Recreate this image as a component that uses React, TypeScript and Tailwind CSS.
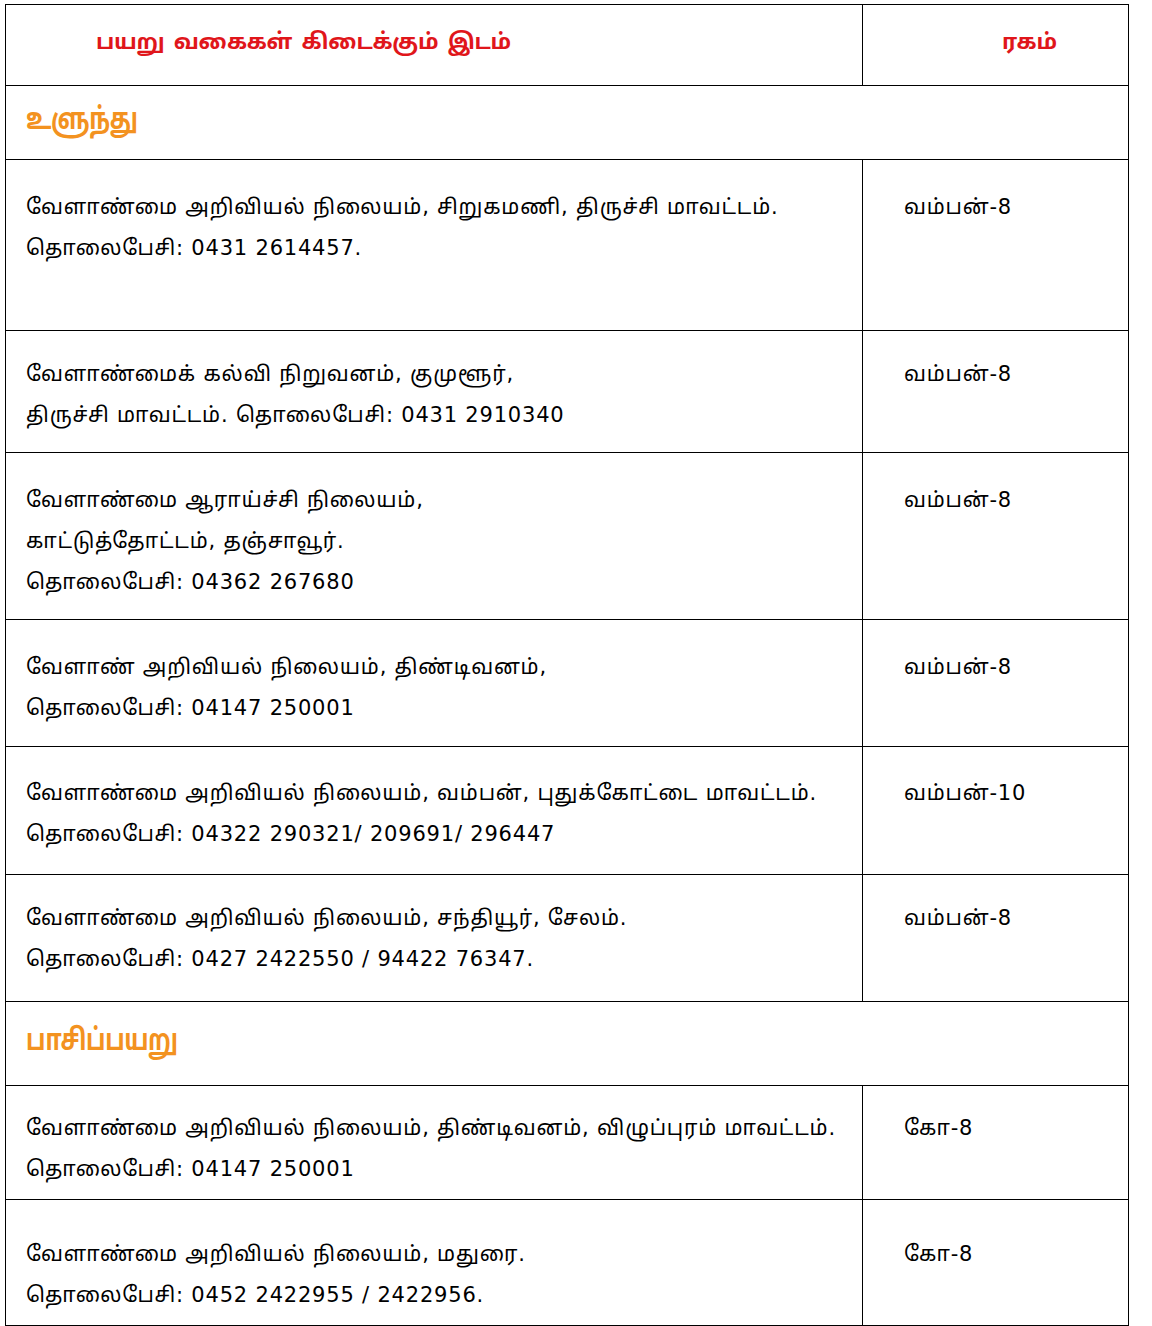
const rows: { lines: string[]; variety: string; h: number; pt: number }[] = [
  {
    lines: ["வேளாண்மை அறிவியல் நிலையம், சிறுகமணி, திருச்சி மாவட்டம்.", "தொலைபேசி: 0431 2614457."],
    variety: "வம்பன்-8",
    h: 171,
    pt: 27,
  },
  {
    lines: ["வேளாண்மைக் கல்வி நிறுவனம், குமுளூர்,", "திருச்சி மாவட்டம். தொலைபேசி: 0431 2910340"],
    variety: "வம்பன்-8",
    h: 122,
    pt: 23,
  },
  {
    lines: ["வேளாண்மை ஆராய்ச்சி நிலையம்,", "காட்டுத்தோட்டம், தஞ்சாவூர்.", "தொலைபேசி: 04362 267680"],
    variety: "வம்பன்-8",
    h: 167,
    pt: 27,
  },
  {
    lines: ["வேளாண் அறிவியல் நிலையம், திண்டிவனம்,", "தொலைபேசி: 04147 250001"],
    variety: "வம்பன்-8",
    h: 127,
    pt: 27,
  },
  {
    lines: ["வேளாண்மை அறிவியல் நிலையம், வம்பன், புதுக்கோட்டை மாவட்டம்.", "தொலைபேசி: 04322 290321/ 209691/ 296447"],
    variety: "வம்பன்-10",
    h: 128,
    pt: 26,
  },
  {
    lines: ["வேளாண்மை அறிவியல் நிலையம், சந்தியூர், சேலம்.", "தொலைபேசி: 0427 2422550 / 94422 76347."],
    variety: "வம்பன்-8",
    h: 127,
    pt: 23,
  },
];

const rows2: typeof rows = [
  {
    lines: ["வேளாண்மை அறிவியல் நிலையம், திண்டிவனம், விழுப்புரம் மாவட்டம்.", "தொலைபேசி: 04147 250001"],
    variety: "கோ-8",
    h: 114,
    pt: 22,
  },
  {
    lines: ["வேளாண்மை அறிவியல் நிலையம், மதுரை.", "தொலைபேசி: 0452 2422955 / 2422956."],
    variety: "கோ-8",
    h: 126,
    pt: 34,
  },
];

const font = { fontFamily: '"DejaVu Sans", "Noto Sans", "Noto Sans Tamil", sans-serif' };
const headFont = { fontFamily: '"Noto Sans", "Noto Sans Tamil", sans-serif' };

function DataRow({ r }: { r: (typeof rows)[number] }) {
  return (
    <div className="flex border-b border-black" style={{ height: r.h }}>
      <div className="w-[857px] border-r border-black pl-[20px]" style={{ paddingTop: r.pt }}>
        {r.lines.map((l, i) => (
          <div key={i} className="text-[21px] leading-[41px] tracking-[0.8px] text-black">
            {l}
          </div>
        ))}
      </div>
      <div className="flex-1 pl-[41px] text-[21px] leading-[41px] tracking-[0.8px] text-black" style={{ paddingTop: r.pt }}>
        {r.variety}
      </div>
    </div>
  );
}

function Section({ title, h }: { title: string; h: number }) {
  return (
    <div className="flex items-center border-b border-black pb-[10px] pl-[20px]" style={{ height: h, ...headFont }}>
      <span className="inline-block origin-left scale-x-[0.78] text-[30px] font-bold tracking-[-0.5px] text-[#f39220]">
        {title}
      </span>
    </div>
  );
}

export default function App() {
  return (
    <div className="min-h-[1326px] w-[1152px] bg-white pt-[4px]" style={font}>
      <div className="ml-[5px] w-[1124px] border-l border-r border-t border-black">
        <div className="flex h-[81px] border-b border-black" style={headFont}>
          <div className="flex w-[857px] items-center border-r border-black pb-[10px] pl-[90px]">
            <span className="text-[22px] font-bold tracking-[-0.3px] text-[#e0161b] [word-spacing:4px]">
              பயறு வகைகள் கிடைக்கும் இடம்
            </span>
          </div>
          <div className="flex flex-1 items-center pb-[10px] pl-[139px]">
            <span className="text-[22px] font-bold text-[#e0161b]">ரகம்</span>
          </div>
        </div>
        <Section title="உளுந்து" h={74} />
        {rows.map((r, i) => (
          <DataRow key={i} r={r} />
        ))}
        <Section title="பாசிப்பயறு" h={84} />
        {rows2.map((r, i) => (
          <DataRow key={i} r={r} />
        ))}
      </div>
    </div>
  );
}
